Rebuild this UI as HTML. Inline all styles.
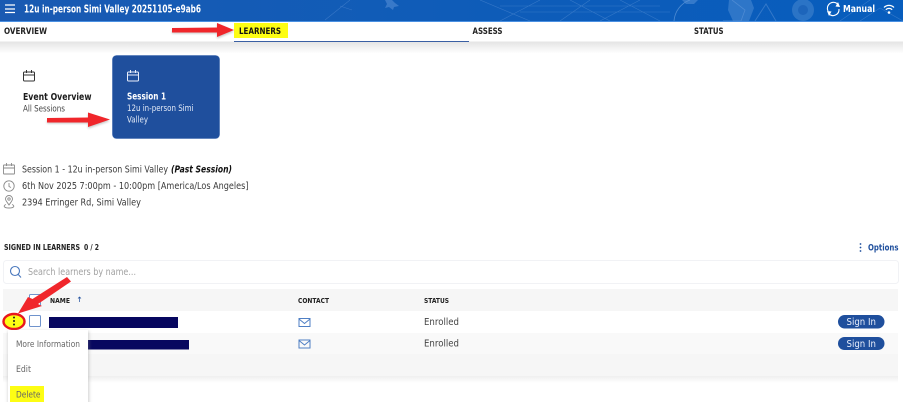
<!DOCTYPE html>
<html lang="en">
<head>
<meta charset="utf-8">
<title>Learners</title>
<style>
html,body{margin:0;padding:0;background:#fff;width:903px;height:402px;overflow:hidden}
svg{display:block;filter:blur(.35px)}
text{font-family:"DejaVu Sans","Liberation Sans",sans-serif;white-space:pre}
</style>
</head>
<body>
<svg xmlns="http://www.w3.org/2000/svg" width="903" height="402" viewBox="0 0 903 402">
<defs>
<linearGradient id="hd" x1="0" x2="1" y1="0" y2="0">
<stop offset="0" stop-color="#1a5ab2"/><stop offset=".5" stop-color="#0f5cb8"/><stop offset="1" stop-color="#075dbd"/>
</linearGradient>
<linearGradient id="sh" x1="0" x2="0" y1="0" y2="1">
<stop offset="0" stop-color="#e4e4e4"/><stop offset="1" stop-color="#ffffff"/>
</linearGradient>
<linearGradient id="tsh" x1="0" x2="0" y1="0" y2="1">
<stop offset="0" stop-color="#efefef"/><stop offset="1" stop-color="#ffffff"/>
</linearGradient>
<filter id="ds" x="-30%" y="-30%" width="160%" height="160%"><feGaussianBlur stdDeviation="1.5"/></filter>
<filter id="as" x="-30%" y="-50%" width="160%" height="200%"><feGaussianBlur stdDeviation="1"/></filter>
</defs>

<rect width="903" height="402" fill="#fff"/>

<!-- header -->
<rect width="903" height="21" fill="url(#hd)"/>
<g stroke="#5d93d8" stroke-width=".6" fill="none" opacity=".5">
<path d="M325 20L350 0M340 6L352 10M500 21L540 0M480 0L530 21M560 21L590 0M570 0L610 21M600 21L640 0M620 0L660 21M520 12H670M500 6H660"/>
<path d="M860 21L880 8L903 21M840 21L870 0"/>
</g>
<path d="M385 0L392 0L395 3L399 6L394 7L393 10L389 7L385 8L387 4Z" fill="#4a86d0" opacity=".7"/>
<g fill="none" stroke="#6a9edb" stroke-width=".8" opacity=".7">
<path d="M674 21A24 24 0 0 1 690 0"/>
<path d="M723 21L741 21L745 10L732 0"/>
</g>
<path d="M682 0L698 0L694 4L686 4Z" fill="#5e96d9" opacity=".5"/>
<path d="M729 0L751 0L754 8L749 21L733 21L728 10Z" fill="#4d8bd4" opacity=".55"/>
<path d="M755 21L766 4L776 21" fill="none" stroke="#5d93d8" stroke-width="1" opacity=".5"/>
<circle cx="803" cy="10" r="11" fill="#4d8bd0" opacity=".5"/>
<circle cx="803" cy="10" r="5" fill="#1a62b8" opacity=".8"/>
<rect y="21" width="903" height="1" fill="#4a90e2"/>

<g stroke="#fff" stroke-width="1.2"><path d="M5 5H15M5 9H15M5 12.5H15"/></g>
<text x="24" y="12.5" font-size="10.5" font-weight="700" fill="#fff" textLength="177" lengthAdjust="spacingAndGlyphs">12u in-person Simi Valley 20251105-e9ab6</text>

<g fill="none" stroke="#fff" stroke-width="1.1">
<path d="M828 11A6 6 0 0 1 838 4.500"/><path d="M839 9A6 6 0 0 1 829 14"/>
</g>
<path d="M838 2L840 7L835.500 6.500Z M829 16L827 11L831.500 11.500Z" fill="#fff"/>
<text x="843" y="12" font-size="9.500" font-weight="700" fill="#fff" textLength="32" lengthAdjust="spacingAndGlyphs">Manual</text>
<g fill="none" stroke="#fff" stroke-width="1.200">
<path d="M884 7.500A7 7 0 0 1 894 7.500"/><path d="M885.800 9.700A4.500 4.500 0 0 1 892.200 9.700"/>
</g>
<circle cx="889" cy="12.500" r="1.300" fill="#fff"/>

<!-- nav -->
<rect y="22" width="903" height="19.500" fill="#fff"/>
<rect y="41.500" width="903" height="12" fill="url(#sh)"/>
<rect x="234" y="23" width="54" height="15" fill="#fdfd14"/>
<rect x="234" y="41" width="235" height="1" fill="#3a5fa3"/>
<text x="4" y="34" font-size="8.500" font-weight="700" fill="#222" textLength="43" lengthAdjust="spacingAndGlyphs">OVERVIEW</text>
<text x="239" y="34" font-size="8.500" font-weight="700" fill="#111" textLength="42" lengthAdjust="spacingAndGlyphs">LEARNERS</text>
<text x="472.500" y="34" font-size="8.500" font-weight="700" fill="#222" textLength="30" lengthAdjust="spacingAndGlyphs">ASSESS</text>
<text x="694" y="34" font-size="8.500" font-weight="700" fill="#222" textLength="29.500" lengthAdjust="spacingAndGlyphs">STATUS</text>

<!-- cards -->
<g fill="none" stroke="#333" stroke-width="1">
<rect x="23.500" y="72" width="11" height="9" rx="1"/><path d="M23.500 75H34.500M26.500 70V73M31.500 70V73"/>
</g>
<text x="23" y="100" font-size="10" font-weight="700" fill="#1c1c1c" textLength="68.500" lengthAdjust="spacingAndGlyphs">Event Overview</text>
<text x="23" y="111.500" font-size="8.500" fill="#444" textLength="42" lengthAdjust="spacingAndGlyphs">All Sessions</text>

<rect x="112.500" y="55.500" width="107" height="83" rx="4" fill="#1f4f9d" stroke="#3a66ad" stroke-width=".6"/>
<g fill="none" stroke="#e8eefb" stroke-width="1">
<rect x="127.500" y="72" width="11" height="9" rx="1"/><path d="M127.500 75H138.500M130.500 70V73M135.500 70V73"/>
</g>
<text x="127" y="99.500" font-size="10" font-weight="700" fill="#fff" textLength="39" lengthAdjust="spacingAndGlyphs">Session 1</text>
<text x="127" y="111" font-size="8.500" fill="#e3eaf7" textLength="66.500" lengthAdjust="spacingAndGlyphs">12u in-person Simi</text>
<text x="127" y="122.500" font-size="8.500" fill="#e3eaf7" textLength="21" lengthAdjust="spacingAndGlyphs">Valley</text>

<!-- info -->
<g fill="none" stroke="#8a8a8a" stroke-width=".9">
<rect x="3.500" y="165" width="11" height="9" rx=".5"/><path d="M3.500 168H14.500M6.500 163V166M11.500 163V166"/>
<circle cx="9" cy="186" r="5.200"/><path d="M9 183V186.500L11 187.500"/>
<path d="M9 205C7 202 5.500 200.500 5.500 199A3.500 3.500 0 0 1 12.500 199C12.500 200.500 11 202 9 205Z"/><circle cx="9" cy="199" r="1.200"/>
<path d="M6 204.500C3 205.500 3.500 208 9 208S15 205.500 12 204.500"/>
</g>
<text x="22" y="172.500" font-size="9.500" fill="#3a3a3a" textLength="146" lengthAdjust="spacingAndGlyphs">Session 1 - 12u in-person Simi Valley</text>
<text x="171" y="172.500" font-size="9.500" font-weight="700" font-style="italic" fill="#111" textLength="61" lengthAdjust="spacingAndGlyphs">(Past Session)</text>
<text x="22" y="189" font-size="9.500" fill="#3a3a3a" textLength="226.500" lengthAdjust="spacingAndGlyphs">6th Nov 2025 7:00pm - 10:00pm [America/Los Angeles]</text>
<text x="22" y="205.500" font-size="9.500" fill="#3a3a3a" textLength="119" lengthAdjust="spacingAndGlyphs">2394 Erringer Rd, Simi Valley</text>

<text x="4" y="250" font-size="8" font-weight="700" fill="#222" textLength="76" lengthAdjust="spacingAndGlyphs">SIGNED IN LEARNERS</text>
<text x="84" y="250" font-size="8" font-weight="700" fill="#222" textLength="15" lengthAdjust="spacingAndGlyphs">0 / 2</text>
<g fill="#1f4f9d"><circle cx="860.500" cy="244" r=".9"/><circle cx="860.500" cy="247.500" r=".9"/><circle cx="860.500" cy="251" r=".9"/></g>
<text x="868" y="250.500" font-size="8.500" font-weight="700" fill="#1f4f9d" textLength="30.500" lengthAdjust="spacingAndGlyphs">Options</text>

<!-- search -->
<rect x="3.500" y="260.500" width="895" height="23" rx="3" fill="#fff" stroke="#f1f2f5"/>
<g fill="none" stroke="#4a78bd" stroke-width="1.100"><circle cx="15" cy="271" r="4.500"/><path d="M18.300 274.500L21 277.500"/></g>
<text x="28" y="275" font-size="9.500" fill="#a2a2a2" textLength="108" lengthAdjust="spacingAndGlyphs">Search learners by name...</text>

<!-- table -->
<rect x="3" y="376" width="895" height="7" fill="url(#tsh)"/>
<rect x="3" y="289" width="895" height="87" fill="#f6f6f6"/>
<rect x="3" y="311" width="895" height="22" fill="#fff"/>
<rect x="3" y="333" width="895" height="21" fill="#f9f9f9"/>

<rect x="29.500" y="294.500" width="11" height="11" rx="1" fill="#fff" stroke="#6f93cc"/>
<text x="50" y="303" font-size="7" font-weight="700" fill="#222" textLength="20" lengthAdjust="spacingAndGlyphs">NAME</text>
<path d="M79.500 302V297M78 298.500L79.500 297L81 298.500" fill="none" stroke="#1f4f9d" stroke-width=".7"/>
<text x="298" y="303" font-size="7" font-weight="700" fill="#222" textLength="31" lengthAdjust="spacingAndGlyphs">CONTACT</text>
<text x="424" y="303" font-size="7" font-weight="700" fill="#222" textLength="25" lengthAdjust="spacingAndGlyphs">STATUS</text>

<rect x="29.500" y="315.500" width="11" height="11" rx="1" fill="#fff" stroke="#6f93cc"/>
<rect x="49" y="317" width="129" height="11" fill="#07075f"/>
<rect x="88" y="340" width="101" height="9.500" fill="#07075f"/>

<g fill="none" stroke="#4f7fc4" stroke-width="1">
<rect x="299" y="318.500" width="11" height="8"/><path d="M299 319L304.500 323.500L310 319"/>
<rect x="299" y="340" width="11" height="8"/><path d="M299 340.500L304.500 345L310 340.500"/>
</g>
<text x="424" y="325" font-size="9.500" fill="#444" textLength="35" lengthAdjust="spacingAndGlyphs">Enrolled</text>
<text x="424" y="346.500" font-size="9.500" fill="#444" textLength="35" lengthAdjust="spacingAndGlyphs">Enrolled</text>

<rect x="838" y="315" width="46.500" height="13.500" rx="6.700" fill="#1f4f9d"/>
<text x="846.500" y="325" font-size="9.500" fill="#e8eefb" textLength="29.500" lengthAdjust="spacingAndGlyphs">Sign In</text>
<rect x="838" y="337" width="46.500" height="13" rx="6.500" fill="#1f4f9d"/>
<text x="846.500" y="346.800" font-size="9.500" fill="#e8eefb" textLength="29.500" lengthAdjust="spacingAndGlyphs">Sign In</text>

<!-- kebab -->
<ellipse cx="14" cy="321.500" rx="10.500" ry="7.500" fill="#fdfd14" stroke="#e8171d" stroke-width="2.400"/>
<g fill="#222"><circle cx="14" cy="317.500" r="1"/><circle cx="14" cy="321" r="1"/><circle cx="14" cy="324.500" r="1"/></g>

<!-- menu -->
<rect x="8" y="331" width="81" height="76" fill="#888" opacity=".4" filter="url(#ds)"/>
<rect x="8" y="330" width="80" height="74" fill="#fff"/>
<text x="16" y="347" font-size="9" fill="#666" textLength="64" lengthAdjust="spacingAndGlyphs">More Information</text>
<text x="16" y="372" font-size="9" fill="#666" textLength="15" lengthAdjust="spacingAndGlyphs">Edit</text>
<rect x="10" y="386" width="34" height="16" fill="#fdfd14"/>
<text x="16" y="397.500" font-size="9" fill="#666" textLength="24.500" lengthAdjust="spacingAndGlyphs">Delete</text>

<!-- arrows -->
<g fill="#999" opacity=".55" filter="url(#as)">
<path d="M172 30L217 29.500V24L234 31.500L217 38.500V33.500L172 33.500Z"/>
<path d="M47 120.500L88 120V114L110 121L88 128.500V123.500L47 123.500Z"/>
</g>
<g fill="#f0262b">
<path d="M172 28L217 27.500V23L234 30L217 37V32.500L172 32.500Z"/>
<path d="M47 118L88 117.500V112.500L110 119.500L88 127V122.500L47 122.500Z"/>
<path d="M67 277L71 281.500L38 304L42 306L18 313.500L28 297L32.500 299Z"/>
</g>
</svg>
</body>
</html>
